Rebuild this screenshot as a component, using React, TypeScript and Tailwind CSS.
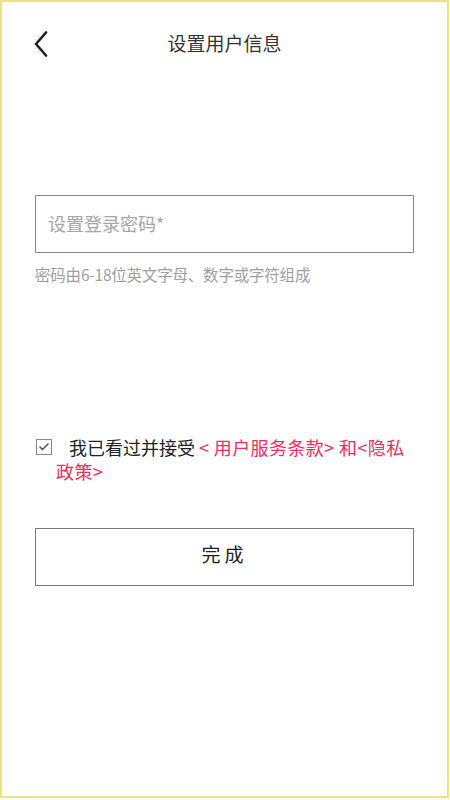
import { Check } from "lucide-react";

const font = { fontFamily: '"Noto Sans CJK SC", "Noto Sans", sans-serif' };

function BackIcon() {
  return (
    <svg width="14" height="26" viewBox="0 0 14 26" fill="none">
      <path d="M12 1.5 L2 13 L12 24.5" stroke="#1f1f1f" strokeWidth="2.6" strokeLinecap="round" strokeLinejoin="round" />
    </svg>
  );
}

export default function App() {
  return (
    <div
      className="flex h-[798px] w-[449px] flex-col border-[2px] border-[#ece37c] bg-white text-[#222]"
      style={font}
    >
      {/* header */}
      <div className="relative mt-[20px] flex h-[40px] items-center justify-center">
        <button className="absolute left-[32px] top-[9px]">
          <BackIcon />
        </button>
        <h1 className="text-[19px] leading-none text-[#333]">设置用户信息</h1>
      </div>

      <div className="mt-[133px] px-[33px]">
        <input
          type="password"
          placeholder="设置登录密码*"
          className="h-[58px] w-full border-[1.5px] border-[#8a8a8a] px-[12px] pb-[3px] text-[18px] outline-none placeholder:text-[#a6a6a6]"
        />
        <p className="mt-[14px] text-[15.5px] leading-none tracking-[-0.2px] text-[#a0a0a0]">
          密码由6-18位英文字母、数字或字符组成
        </p>
      </div>

      <div className="mt-[152px] flex items-start pl-[34px] pr-[30px]">
        <span className="mt-[4px] flex h-[16px] w-[16px] shrink-0 items-center justify-center border border-[#8a8a8a] bg-white text-[#555]">
          <Check className="h-[12px] w-[12px]" strokeWidth={3.2} />
        </span>
        <p className="ml-[4px] indent-[13px] text-[18px] leading-[24px] text-[#222]">
          我已看过并接受
          <span className="ml-[4px] tracking-[0.4px] text-[#ee2d62]">&lt; 用户服务条款&gt; 和&lt;隐私政策&gt;</span>
        </p>
      </div>

      <div className="mt-[45px] px-[33px]">
        <button className="h-[58px] w-full border-[1.5px] border-[#7a7a7a] bg-white pb-[4px] text-[19px] tracking-[4px] text-[#222]">
          完成
        </button>
      </div>
    </div>
  );
}
